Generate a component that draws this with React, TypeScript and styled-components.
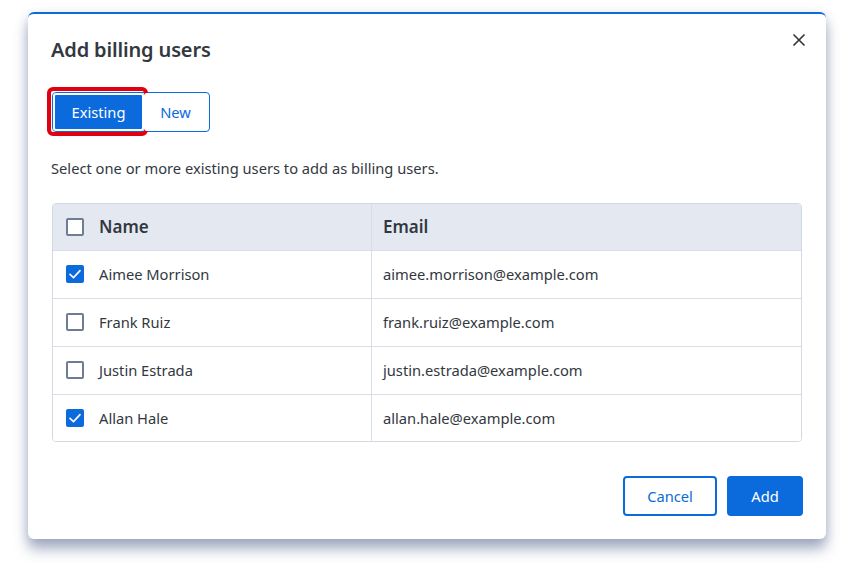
import React, { useState } from "react";
import styled, { createGlobalStyle } from "styled-components";

const BLUE = "#0b6bdc";
const TEXT = "#333840";

const Global = createGlobalStyle`
  html, body { margin: 0; padding: 0; background: #ffffff; }
  body { font-family: "Noto Sans", "Open Sans", sans-serif; color: ${TEXT}; }
  * { box-sizing: border-box; }
`;

const Page = styled.div`
  width: 854px;
  height: 582px;
  padding: 12px 0 0 28px;
`;

const Dialog = styled.div`
  width: 798px;
  height: 527px;
  background: #fff;
  border-top: 2px solid ${BLUE};
  border-radius: 6px;
  box-shadow: 0 10px 14px rgba(60, 80, 125, 0.45), 0 2px 10px rgba(60, 80, 125, 0.15);
  padding: 14px 24px 23px 24px;
  display: flex;
  flex-direction: column;
`;

const Header = styled.div`
  display: flex;
  justify-content: space-between;
  align-items: flex-start;
`;

const Title = styled.h2`
  margin: 0 0 0 -1px;
  padding-top: 8px;
  font-size: 20px;
  line-height: 28px;
  font-weight: 600;
  color: ${TEXT};
  letter-spacing: -0.15px;
`;

const CloseButton = styled.button`
  width: 24px;
  height: 24px;
  margin-right: -9px;
  border: 0;
  background: transparent;
  padding: 0;
  display: flex;
  align-items: center;
  justify-content: center;
  color: #333;
  cursor: pointer;
`;

const Toggle = styled.div`
  margin-top: 28px;
  display: flex;
  align-self: flex-start;
  border: 1px solid ${BLUE};
  border-radius: 4px;
  height: 40px;
  width: 158px;
`;

const ToggleButton = styled.button<{ $active?: boolean }>`
  position: relative;
  border: 0;
  font-family: inherit;
  font-size: 14.7px;
  padding: 0;
  height: 100%;
  width: ${(p) => (p.$active ? "91px" : "63px")};
  border-radius: 3px;
  background: ${(p) => (p.$active ? BLUE : "#fff")};
  color: ${(p) => (p.$active ? "#fff" : BLUE)};
  box-shadow: ${(p) => (p.$active ? "inset 0 0 0 2px #fff" : "none")};
  cursor: pointer;
  ${(p) =>
    p.$active &&
    `
    &::after {
      content: "";
      position: absolute;
      top: -6px;
      bottom: -5px;
      left: -6px;
      right: -4px;
      border: 4px solid #e0000f;
      border-radius: 6px;
      pointer-events: none;
    }
  `}
`;

const Description = styled.p`
  margin: 25px 0 0 -1px;
  font-size: 14.7px;
  line-height: 22px;
  color: ${TEXT};
`;

const Table = styled.div`
  margin-top: 24px;
  border: 1px solid #d3d9e2;
  border-radius: 4px;
  overflow: hidden;
`;

const Row = styled.div<{ $head?: boolean }>`
  display: grid;
  grid-template-columns: 319px 1fr;
  height: ${(p) => (p.$head ? "46px" : "48px")};
  background: ${(p) => (p.$head ? "#e4e9f1" : "#fff")};
  border-top: ${(p) => (p.$head ? "0" : "1px solid #d9dee6")};
  &:last-child { height: 47px; }
`;

const Cell = styled.div<{ $head?: boolean; $first?: boolean }>`
  display: flex;
  align-items: center;
  gap: 15px;
  padding-left: ${(p) => (p.$first ? "13px" : "11px")};
  border-right: ${(p) => (p.$first ? "1px solid #d9dee6" : "0")};
  font-size: ${(p) => (p.$head ? "17px" : "14.7px")};
  font-weight: ${(p) => (p.$head ? 600 : 400)};
  color: ${TEXT};
  padding-bottom: 1px;
`;

const Box = styled.span<{ $checked?: boolean }>`
  width: 18px;
  height: 18px;
  flex: none;
  border-radius: 2px;
  border: ${(p) => (p.$checked ? "0" : "2px solid #6f7d92")};
  background: ${(p) => (p.$checked ? BLUE : "#fff")};
  display: flex;
  align-items: center;
  justify-content: center;
`;

const Footer = styled.div`
  margin-top: auto;
  margin-right: -1px;
  display: flex;
  justify-content: flex-end;
  gap: 10px;
`;

const ActionButton = styled.button<{ $primary?: boolean }>`
  height: 40px;
  width: ${(p) => (p.$primary ? "76px" : "94px")};
  border-radius: 4px;
  font-family: inherit;
  font-size: 14.7px;
  border: ${(p) => (p.$primary ? "0" : `2px solid ${BLUE}`)};
  background: ${(p) => (p.$primary ? BLUE : "#fff")};
  color: ${(p) => (p.$primary ? "#fff" : BLUE)};
  cursor: pointer;
`;

const Check = () => (
  <svg width="14" height="14" viewBox="0 0 14 14" fill="none">
    <path d="M2 7.3 L5.5 10.6 L12 3.6" stroke="#fff" strokeWidth="1.6" strokeLinecap="round" strokeLinejoin="round" />
  </svg>
);

const Checkbox = ({ checked }: { checked: boolean }) => (
  <Box $checked={checked}>{checked && <Check />}</Box>
);

const users = [
  { name: "Aimee Morrison", email: "aimee.morrison@example.com", checked: true },
  { name: "Frank Ruiz", email: "frank.ruiz@example.com", checked: false },
  { name: "Justin Estrada", email: "justin.estrada@example.com", checked: false },
  { name: "Allan Hale", email: "allan.hale@example.com", checked: true },
];

export default function App() {
  const [tab, setTab] = useState("existing");
  return (
    <Page>
      <Global />
      <Dialog>
        <Header>
          <Title>Add billing users</Title>
          <CloseButton aria-label="Close">
            <svg width="14" height="14" viewBox="0 0 14 14">
              <path d="M1.5 1.5 L12.5 12.5 M12.5 1.5 L1.5 12.5" stroke="#333" strokeWidth="1.6" />
            </svg>
          </CloseButton>
        </Header>
        <Toggle>
          <ToggleButton $active={tab === "existing"} onClick={() => setTab("existing")}>Existing</ToggleButton>
          <ToggleButton $active={tab === "new"} onClick={() => setTab("new")}>New</ToggleButton>
        </Toggle>
        <Description>Select one or more existing users to add as billing users.</Description>
        <Table>
          <Row $head>
            <Cell $head $first>
              <Checkbox checked={false} />
              Name
            </Cell>
            <Cell $head>Email</Cell>
          </Row>
          {users.map((u) => (
            <Row key={u.email}>
              <Cell $first>
                <Checkbox checked={u.checked} />
                {u.name}
              </Cell>
              <Cell>{u.email}</Cell>
            </Row>
          ))}
        </Table>
        <Footer>
          <ActionButton>Cancel</ActionButton>
          <ActionButton $primary>Add</ActionButton>
        </Footer>
      </Dialog>
    </Page>
  );
}
